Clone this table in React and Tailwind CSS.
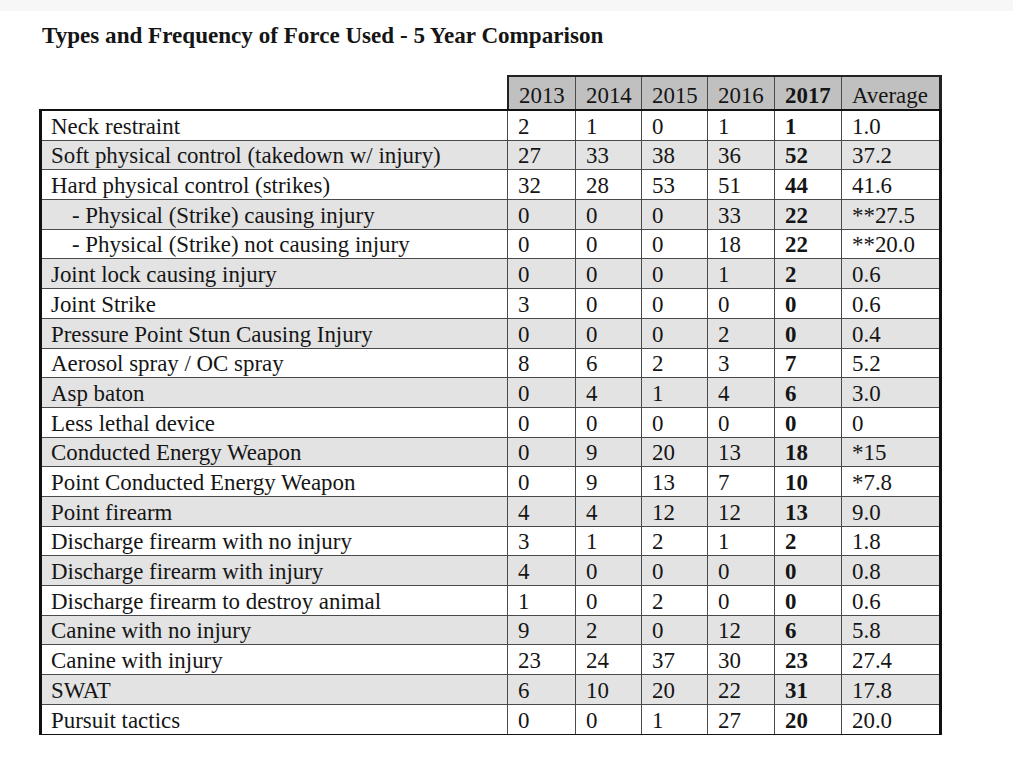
import React from "react";

const rows = [
  ["Neck restraint", ["2", "1", "0", "1", "1", "1.0"]],
  ["Soft physical control (takedown w/ injury)", ["27", "33", "38", "36", "52", "37.2"]],
  ["Hard physical control (strikes)", ["32", "28", "53", "51", "44", "41.6"]],
  ["- Physical (Strike) causing injury", ["0", "0", "0", "33", "22", "**27.5"], true],
  ["- Physical (Strike) not causing injury", ["0", "0", "0", "18", "22", "**20.0"], true],
  ["Joint lock causing injury", ["0", "0", "0", "1", "2", "0.6"]],
  ["Joint Strike", ["3", "0", "0", "0", "0", "0.6"]],
  ["Pressure Point Stun Causing Injury", ["0", "0", "0", "2", "0", "0.4"]],
  ["Aerosol spray / OC spray", ["8", "6", "2", "3", "7", "5.2"]],
  ["Asp baton", ["0", "4", "1", "4", "6", "3.0"]],
  ["Less lethal device", ["0", "0", "0", "0", "0", "0"]],
  ["Conducted Energy Weapon", ["0", "9", "20", "13", "18", "*15"]],
  ["Point Conducted Energy Weapon", ["0", "9", "13", "7", "10", "*7.8"]],
  ["Point firearm", ["4", "4", "12", "12", "13", "9.0"]],
  ["Discharge firearm with no injury", ["3", "1", "2", "1", "2", "1.8"]],
  ["Discharge firearm with injury", ["4", "0", "0", "0", "0", "0.8"]],
  ["Discharge firearm to destroy animal", ["1", "0", "2", "0", "0", "0.6"]],
  ["Canine with no injury", ["9", "2", "0", "12", "6", "5.8"]],
  ["Canine with injury", ["23", "24", "37", "30", "23", "27.4"]],
  ["SWAT", ["6", "10", "20", "22", "31", "17.8"]],
  ["Pursuit tactics", ["0", "0", "1", "27", "20", "20.0"]],
];

const bodyCols = [
  "w-[68px] border-r border-[#4a4a4a]",
  "w-[66px] border-r border-[#4a4a4a]",
  "w-[66px] border-r border-[#4a4a4a]",
  "w-[67px] border-r border-[#4a4a4a]",
  "w-[67px] border-r border-[#4a4a4a] font-bold",
  "w-[97px]",
];

const headCols = [
  ["2013", "w-[67px] border-r border-[#4a4a4a]"],
  ["2014", "w-[66px] border-r border-[#4a4a4a]"],
  ["2015", "w-[66px] border-r border-[#4a4a4a]"],
  ["2016", "w-[67px] border-r border-[#4a4a4a]"],
  ["2017", "w-[67px] border-r border-[#4a4a4a] font-bold"],
  ["Average", "w-[97px]"],
];

export default function App() {
  return (
    <div className="min-h-[768px] w-[1013px] bg-white font-['Liberation_Serif',serif] text-[#151515]">
      <div className="h-[11px] bg-[#f7f7f7]" />
      <div className="pl-[42px] pt-[12px] text-[23.1px] font-bold leading-[25px]">
        Types and Frequency of Force Used - 5 Year Comparison
      </div>
      <div className="ml-[39px] mt-[27px] w-[903px] text-[22.9px]">
        <div className="flex">
          <div className="w-[468px]" />
          <div className="flex h-[34px] border-l-2 border-r-[3px] border-t-2 border-[#222] bg-[#c0c0c0]">
            {headCols.map(([t, c]) => (
              <div key={t} className={`flex items-end pl-[10px] leading-[25px] pb-[1px] ${c}`}>
                {t}
              </div>
            ))}
          </div>
        </div>
        <div className="border-l-[3px] border-r-[3px] border-t-2 border-b border-[#111]">
          {rows.map(([label, vals, sub], i) => (
            <div
              key={label}
              className={`flex h-[29.7px] ${i < rows.length - 1 ? "border-b border-[#4a4a4a]" : ""} ${
                i % 2 === 1 ? "bg-[#e3e3e3]" : "bg-white"
              }`}
            >
              <div
                className={`flex w-[466px] items-end border-r border-[#4a4a4a] leading-[25px] pb-[1px] ${
                  sub ? "pl-[30px]" : "pl-[9px]"
                }`}
              >
                {label}
              </div>
              {vals.map((v, j) => (
                <div key={j} className={`flex items-end pl-[10px] leading-[25px] pb-[1px] ${bodyCols[j]}`}>
                  {v}
                </div>
              ))}
            </div>
          ))}
        </div>
      </div>
    </div>
  );
}
